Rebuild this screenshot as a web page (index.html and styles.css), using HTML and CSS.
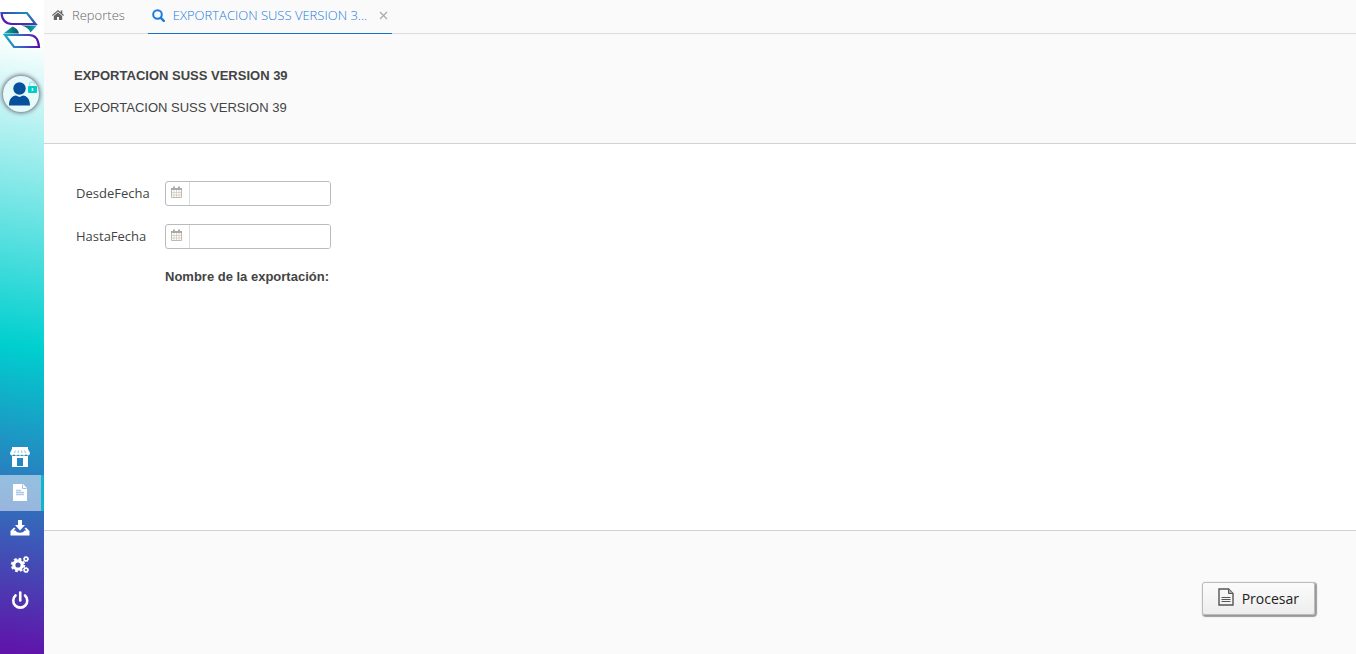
FILE: index.html
```html
<!DOCTYPE html>
<html lang="es">
<head>
  <meta charset="UTF-8">
  <meta name="viewport" content="width=device-width, initial-scale=1.0">
  <title>Reportes</title>
  <link rel="stylesheet" href="styles.css">
</head>
<body>
  <nav class="sidebar">
    <a class="logo" href="#" aria-label="Inicio">
      <svg width="42" height="38" viewBox="0 0 42 38">
        <defs>
          <linearGradient id="gTop" x1="0" y1="1" x2="1" y2="0">
            <stop offset="0" stop-color="#5a0fb0"/>
            <stop offset=".4" stop-color="#4a30b4"/>
            <stop offset="1" stop-color="#0fa4bf"/>
          </linearGradient>
          <linearGradient id="gBottom" x1="0" y1="0" x2="1" y2="0">
            <stop offset="0" stop-color="#16adc2"/>
            <stop offset=".55" stop-color="#3f55c2"/>
            <stop offset="1" stop-color="#5a0fa8"/>
          </linearGradient>
          <linearGradient id="gDark" x1="0" y1="0" x2="1" y2="0">
            <stop offset="0" stop-color="#075060"/>
            <stop offset="1" stop-color="#0fb5b5"/>
          </linearGradient>
          <linearGradient id="gDark2" x1="0" y1="0" x2="1" y2="0">
            <stop offset="0" stop-color="#0fb5b5"/>
            <stop offset="1" stop-color="#075060"/>
          </linearGradient>
        </defs>
        <path d="M1.500 2H27L35.500 13H12C5 13 2 8 1.500 2Z" fill="none" stroke="url(#gTop)" stroke-width="2.200"/>
        <path d="M5 24H29C36 24 38.500 29 39 36H14Z" fill="none" stroke="url(#gBottom)" stroke-width="2.200"/>
        <path d="M21 14.500H37L30.500 21.500C29 18 26 15.500 21 14.500Z" fill="url(#gDark)"/>
        <path d="M3.500 22.500L12.500 15.500C16 17 18.500 19 19 22.500Z" fill="url(#gDark2)"/>
      </svg>
    </a>
    <button class="avatar" type="button" aria-label="Usuario">
      <svg width="36" height="36" viewBox="0 0 36 36">
        <circle cx="16.500" cy="12.500" r="6.200" fill="#07509b"/>
        <path d="M6 29.500C6 23 9 20 13 19.500L16.500 21L20 19.500C24 20 27 23 27 29.500Z" fill="#07509b"/>
        <path d="M26.500 11V8.500A2.500 2.500 0 0 1 31.500 8.500" fill="none" stroke="#a5eeee" stroke-width="1.500"/>
        <rect x="25" y="10" width="9" height="7" rx="1" fill="#00cccc"/>
        <path d="M29.500 12V15" stroke="#e8ffff" stroke-width="1.500"/>
      </svg>
    </button>
    <ul class="menu">
      <li>
        <a href="#" aria-label="Comercio">
          <svg width="20" height="22" viewBox="0 0 20 22" fill="#fff">
            <path d="M2 1H18V3H2Z"/>
            <path d="M2 3H18L20 7C20 10 16.500 10 16 8C15 10 12.500 10 12 8C11.500 10 8.500 10 8 8C7.500 10 5 10 4 8C3.500 10 0 10 0 7Z"/>
            <path d="M2 10H18V21H2ZM7 12V20H13V12Z" fill-rule="evenodd"/>
            <path d="M5.500 4.500L4.500 7M8.500 4.500L8 7M11.500 4.500L12 7M14.500 4.500L15.500 7" stroke="#2b86be" stroke-width=".5"/>
          </svg>
        </a>
      </li>
      <li class="active">
        <a href="#" aria-label="Reportes">
          <svg width="20" height="22" viewBox="0 0 20 22">
            <path d="M3 2H13L17 6V19H3Z" fill="#fff"/>
            <path d="M12.500 2.500V6.500H16.500" fill="none" stroke="#a6bfe0"/>
            <path d="M6 8.500H11M6 10.500H14M6 12.500H14" stroke="#b4cbe8" stroke-width="1.500"/>
          </svg>
        </a>
      </li>
      <li>
        <a href="#" aria-label="Descargas">
          <svg width="20" height="22" viewBox="0 0 20 22" fill="#fff">
            <path d="M8 2H12V7H15L10 12.500L5 7H8Z"/>
            <path d="M.5 13L4 9.500L5.500 10.500L3.500 12.500H5.500C7 15.500 13 15.500 14.500 12.500H16.500L14.500 10.500L16 9.500L19.500 13V17.500H.5Z"/>
          </svg>
        </a>
      </li>
      <li>
        <a href="#" aria-label="Configuración">
          <svg width="20" height="22" viewBox="0 0 20 22" fill="none" stroke="#fff">
            <circle cx="8" cy="11" r="4.200" stroke-width="3.200"/>
            <circle cx="8" cy="11" r="6.200" stroke-width="2" stroke-dasharray="2.700 2.170"/>
            <circle cx="16" cy="5" r="1.800" stroke-width="1.500"/>
            <circle cx="16" cy="5" r="2.600" stroke-dasharray="1.100 .94"/>
            <circle cx="16" cy="16" r="1.800" stroke-width="1.500"/>
            <circle cx="16" cy="16" r="2.600" stroke-dasharray="1.100 .94"/>
          </svg>
        </a>
      </li>
      <li>
        <a href="#" aria-label="Salir">
          <svg width="20" height="22" viewBox="0 0 20 22" fill="none" stroke="#fff" stroke-width="2.600" stroke-linecap="round">
            <path d="M5.500 5.500A7 7 0 1 0 15 5.500"/>
            <path d="M10.250 2.500V10.500"/>
          </svg>
        </a>
      </li>
    </ul>
  </nav>

  <div class="page">
    <div class="tabs">
      <a class="tab" href="#">
        <svg width="12" height="12" viewBox="0 0 12 12" fill="#666">
          <path d="M6 1L0 6L.7 7L6 2.600L11.300 7L12 6L10.300 4.500V1.500H8.700V3.200Z"/>
          <path d="M6 3.500L1.800 7V11H5V8H7V11H10.200V7Z"/>
        </svg>
        <span>Reportes</span>
      </a>
      <div class="tab current">
        <svg width="13" height="13" viewBox="0 0 13 13" fill="none" stroke="#1a7be0">
          <circle cx="5.500" cy="5.500" r="4.300" stroke-width="2"/>
          <path d="M8.800 8.800L11.800 11.800" stroke-width="2.400" stroke-linecap="round"/>
        </svg>
        <a href="#">EXPORTACION SUSS VERSION 3...</a>
        <button class="close" type="button" aria-label="Cerrar">
          <svg width="9" height="9" viewBox="0 0 9 9" stroke="#aaa" stroke-width="1.200">
            <path d="M1 1L8 8M8 1L1 8"/>
          </svg>
        </button>
      </div>
    </div>

    <header class="heading">
      <h1>EXPORTACION SUSS VERSION 39</h1>
      <p>EXPORTACION SUSS VERSION 39</p>
    </header>

    <form class="export">
      <div class="fields">
        <label for="desde">DesdeFecha</label>
        <div class="date">
          <span class="date-icon">
            <svg width="11" height="12" viewBox="0 0 11 12">
              <path d="M.5 2.500H10.500V11.500H.5Z" fill="#fff" stroke="#bbb"/>
              <path d="M0 2H11V4H0Z" fill="#aaa"/>
              <path d="M3 .5V3M8 .5V3" stroke="#aaa" stroke-width="2"/>
              <path d="M3 4V11M5.500 4V11M8 4V11M1 6.500H10M1 9H10" stroke="#d6cabd" stroke-width=".8"/>
            </svg>
          </span>
          <input type="text" id="desde">
        </div>
        <label for="hasta">HastaFecha</label>
        <div class="date">
          <span class="date-icon">
            <svg width="11" height="12" viewBox="0 0 11 12">
              <path d="M.5 2.500H10.500V11.500H.5Z" fill="#fff" stroke="#bbb"/>
              <path d="M0 2H11V4H0Z" fill="#aaa"/>
              <path d="M3 .5V3M8 .5V3" stroke="#aaa" stroke-width="2"/>
              <path d="M3 4V11M5.500 4V11M8 4V11M1 6.500H10M1 9H10" stroke="#d6cabd" stroke-width=".8"/>
            </svg>
          </span>
          <input type="text" id="hasta">
        </div>
        <strong class="name">Nombre de la exportación:</strong>
      </div>
      <div class="actions">
        <button class="process" type="submit">
          <svg width="16" height="18" viewBox="0 0 16 18" fill="none" stroke="#555">
            <path d="M1 1H10.500L15 5.500V17H1Z" stroke-width="1.400"/>
            <path d="M10.500 1V5.500H15" fill="#aaa"/>
            <path d="M3.500 9.500H12.500M3.500 11.500H12.500M3.500 13.500H12.500"/>
          </svg>
          <span>Procesar</span>
        </button>
      </div>
    </form>
  </div>
</body>
</html>
```

FILE: styles.css
```css
* {
  box-sizing: border-box;
}
body {
  margin: 0;
  display: flex;
  min-height: 100vh;
  background: #fff;
  color: #444;
  font-family: "Liberation Sans", Arial, sans-serif;
  font-size: 13px;
  line-height: 16px;
}
svg {
  display: block;
  flex: none;
}
a {
  color: inherit;
  text-decoration: none;
}
button {
  padding: 0;
  border: 0;
  background: none;
  font: inherit;
  cursor: pointer;
}

/* sidebar */
.sidebar {
  flex: none;
  width: 44px;
  display: flex;
  flex-direction: column;
  background: linear-gradient(190deg, #fff 6%, #00cfcf 53%, #5f15aa 99%);
}
.logo {
  padding-top: 11px;
}
.avatar {
  width: 36px;
  height: 36px;
  margin: 27px 0 0 3px;
  border-radius: 50%;
  background: #e6fafa;
  box-shadow: 0 0 4px 1px #667;
}
.menu {
  margin: auto 0 0;
  padding: 0 0 35px;
  list-style: none;
}
.menu a {
  display: flex;
  align-items: center;
  height: 36px;
  padding-left: 10px;
}
.menu .active {
  background: rgba(255, 255, 255, .5);
  border-right: 3px solid #0fb5cb;
}

/* tabs */
.page {
  flex: 1;
  min-width: 0;
  display: flex;
  flex-direction: column;
}
.tabs {
  display: flex;
  gap: 23px;
  height: 34px;
  padding-left: 8px;
  background: #fafafa;
  border-bottom: 1px solid #ddd;
  font-family: "Open Sans", sans-serif;
  font-weight: 300;
}
.tab {
  display: flex;
  align-items: center;
  gap: 8px;
  height: 34px;
  padding-bottom: 4px;
  color: #666;
}
.tab.current {
  min-width: 244px;
  padding: 0 4px 3px;
  border-bottom: 1px solid #1a6fd0;
  color: #1a7be0;
}
.close {
  margin-left: auto;
}

.heading {
  height: 110px;
  padding: 34px 30px 0;
  background: #fafafa;
  border-bottom: 1px solid #d2d2d2;
}
.heading h1 {
  margin: 0 0 16px;
  font-size: 13px;
}
.heading p {
  margin: 0;
}

/* form */
.export {
  flex: 1;
  display: flex;
  flex-direction: column;
}
.fields {
  flex: 1;
  display: grid;
  grid-template-columns: 71px 166px;
  grid-auto-rows: 25px;
  align-content: start;
  align-items: center;
  gap: 18px;
  padding: 37px 32px;
}
.fields label {
  padding-bottom: 2px;
  font-family: "Open Sans", sans-serif;
}
.date {
  display: flex;
  height: 25px;
  border: 1px solid #bbb;
  border-radius: 3px;
  overflow: hidden;
}
.date-icon {
  flex: none;
  width: 24px;
  padding: 4px 0 0 5px;
  border-right: 1px solid #ddd;
}
.date input {
  flex: 1;
  min-width: 0;
  padding: 0 6px;
  border: 0;
  outline: 0;
  font: inherit;
}
.name {
  grid-column: 2;
  align-self: start;
  padding-top: 2px;
}

.actions {
  height: 124px;
  display: flex;
  align-items: center;
  justify-content: flex-end;
  padding: 12px 41px 0 0;
  background: #fafafa;
  border-top: 1px solid #d2d2d2;
}
.process {
  display: flex;
  align-items: center;
  gap: 8px;
  height: 33px;
  padding: 0 15px;
  border: 1px solid #bbb;
  border-radius: 3px;
  background: linear-gradient(#fbfbfb, #eee);
  box-shadow: 1px 1px 1px 1px #999;
  color: #222;
  font-family: "Open Sans", sans-serif;
  font-size: 14px;
}
.process svg {
  margin-bottom: 3px;
}
```
